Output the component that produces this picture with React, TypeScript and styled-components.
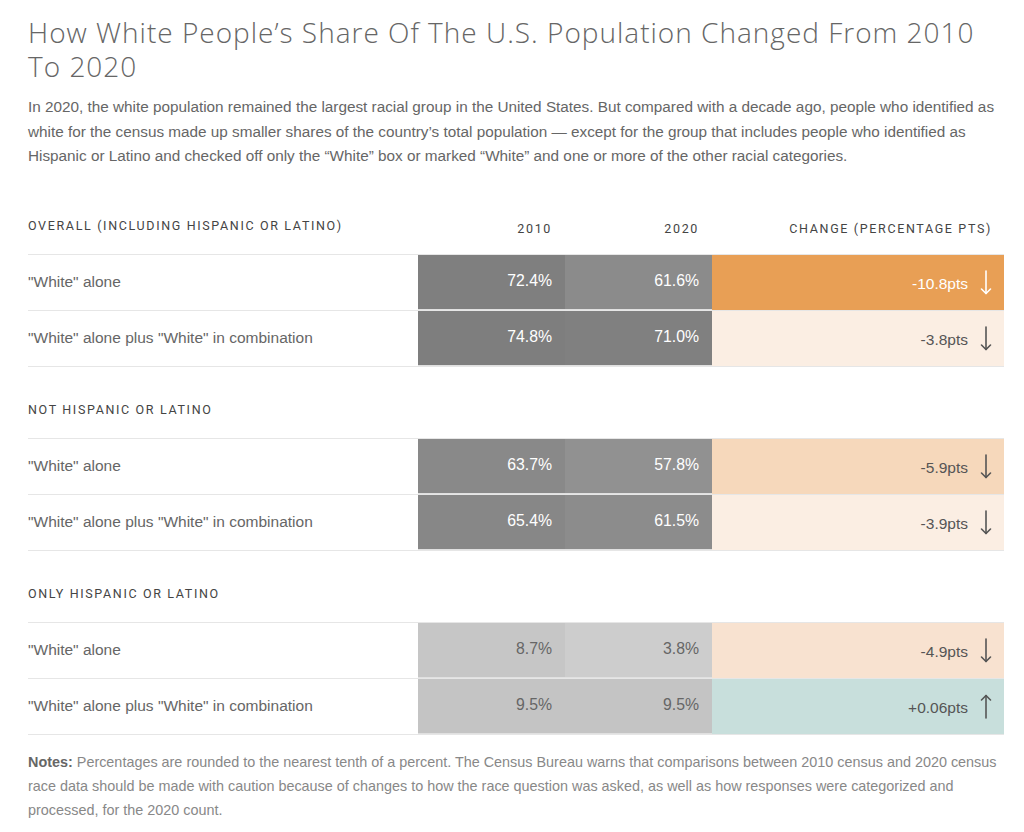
import React from "react"
import styled, { createGlobalStyle } from "styled-components"

const GlobalStyle = createGlobalStyle`
  body {
    margin: 0;
    background: #fff;
    font-family: "Liberation Sans", Arial, sans-serif;
  }
`

type Change = {
  value: string
  up?: boolean
  bg: string
  light?: boolean
}

type Row = {
  label: string
  y2010: string
  y2020: string
  bg2010: string
  bg2020: string
  darkText?: boolean
  change: Change
}

type Section = {
  title: string
  rows: Row[]
}

const SECTIONS: Section[] = [
  {
    title: "Overall (including Hispanic or Latino)",
    rows: [
      {
        label: "\"White\" alone",
        y2010: "72.4%",
        y2020: "61.6%",
        bg2010: "#7f7f7f",
        bg2020: "#8b8b8b",
        change: { value: "-10.8pts", bg: "#e89f55", light: true },
      },
      {
        label: "\"White\" alone plus \"White\" in combination",
        y2010: "74.8%",
        y2020: "71.0%",
        bg2010: "#7e7e7e",
        bg2020: "#808080",
        change: { value: "-3.8pts", bg: "#fbeee3" },
      },
    ],
  },
  {
    title: "Not Hispanic or Latino",
    rows: [
      {
        label: "\"White\" alone",
        y2010: "63.7%",
        y2020: "57.8%",
        bg2010: "#898989",
        bg2020: "#919191",
        change: { value: "-5.9pts", bg: "#f6d8bb" },
      },
      {
        label: "\"White\" alone plus \"White\" in combination",
        y2010: "65.4%",
        y2020: "61.5%",
        bg2010: "#878787",
        bg2020: "#8c8c8c",
        change: { value: "-3.9pts", bg: "#fbeee3" },
      },
    ],
  },
  {
    title: "Only Hispanic or Latino",
    rows: [
      {
        label: "\"White\" alone",
        y2010: "8.7%",
        y2020: "3.8%",
        bg2010: "#c6c6c6",
        bg2020: "#cdcdcd",
        darkText: true,
        change: { value: "-4.9pts", bg: "#f8e2d0" },
      },
      {
        label: "\"White\" alone plus \"White\" in combination",
        y2010: "9.5%",
        y2020: "9.5%",
        bg2010: "#c4c4c4",
        bg2020: "#c4c4c4",
        darkText: true,
        change: { value: "+0.06pts", bg: "#c8dfdc", up: true },
      },
    ],
  },
]

const Page = styled.div`
  padding: 15px 20px 20px 28px;
  color: #666;
`

const Title = styled.h1`
  margin: 0;
  font-family: "Open Sans", sans-serif;
  font-weight: 300;
  font-size: 28px;
  letter-spacing: 1px;
  line-height: 34px;
  color: #666;
`

const Intro = styled.p`
  margin: 12px 0 14px;
  font-size: 15.3px;
  line-height: 24.5px;
  color: #666;
`

const Grid = styled.div`
  display: grid;
  grid-template-columns: 390px 147px 147px 1fr;
`

const HeadRow = styled(Grid)`
  height: 71px;
  align-items: end;
  border-bottom: 1px solid #e6e6e6;
`

const HeadCell = styled.div<{ $right?: boolean; $pad?: number }>`
  font-family: Roboto, sans-serif;
  font-weight: 400;
  font-size: 12.5px;
  letter-spacing: 1.65px;
  text-transform: uppercase;
  line-height: 20px;
  color: #444;
  text-align: ${p => (p.$right ? "right" : "left")};
  padding-right: ${p => p.$pad ?? 0}px;
  padding-bottom: ${p => (p.$right ? 15 : 18)}px;
`

const DataRow = styled(Grid)`
  height: 55px;
  border-bottom: 1px solid #e6e6e6;
`

const Label = styled.div`
  display: flex;
  align-items: center;
  font-size: 15.5px;
  color: #666;
`

const Value = styled.div<{ $bg: string; $dark?: boolean }>`
  display: flex;
  align-items: center;
  justify-content: flex-end;
  padding: 0 13px 2px 0;
  background: ${p => p.$bg};
  color: ${p => (p.$dark ? "#666" : "#fff")};
  font-size: 15.8px;
  box-shadow: inset 0 -1px 0 #e0e0e0;
`

const ChangeCell = styled.div<{ $bg: string; $light?: boolean }>`
  display: flex;
  align-items: center;
  justify-content: flex-end;
  gap: 12px;
  padding: 4px 12px 0 0;
  background: ${p => p.$bg};
  color: ${p => (p.$light ? "#fff" : "#555")};
  font-size: 15.5px;
`

const Arrow = styled.svg`
  display: block;
  margin-top: -4px;
`

const Notes = styled.p`
  margin: 15px 0 0;
  font-size: 14.4px;
  line-height: 24px;
  color: #888;
`

const NotesLead = styled.b`
  color: #666;
`

const ArrowIcon = ({ up }: { up?: boolean }) => (
  <Arrow width="12" height="25" viewBox="0 0 12 25" fill="none" stroke="currentColor" strokeWidth="1.6" strokeLinecap="round" strokeLinejoin="round">
    {up ? (
      <>
        <line x1="6" y1="1.5" x2="6" y2="24" />
        <polyline points="1.5,6 6,1.5 10.5,6" />
      </>
    ) : (
      <>
        <line x1="6" y1="1" x2="6" y2="23.5" />
        <polyline points="1.5,19 6,23.5 10.5,19" />
      </>
    )}
  </Arrow>
)

const App = () => {
  return (
    <Page>
      <GlobalStyle />
      <Title>How White People’s Share Of The U.S. Population Changed From 2010 To 2020</Title>
      <Intro>
        In 2020, the white population remained the largest racial group in the United States. But compared with a decade ago, people who identified as white for the census made up smaller shares of the country’s total population — except for the group that includes people who identified as Hispanic or Latino and checked off only the “White” box or marked “White” and one or more of the other racial categories.
      </Intro>
      {SECTIONS.map((section, i) => (
        <div key={section.title}>
          <HeadRow>
            <HeadCell>{section.title}</HeadCell>
            {i === 0 && (
              <>
                <HeadCell $right $pad={13}>2010</HeadCell>
                <HeadCell $right $pad={13}>2020</HeadCell>
                <HeadCell $right $pad={12}>Change (percentage pts)</HeadCell>
              </>
            )}
          </HeadRow>
          {section.rows.map(row => (
            <DataRow key={row.label}>
              <Label>{row.label}</Label>
              <Value $bg={row.bg2010} $dark={row.darkText}>{row.y2010}</Value>
              <Value $bg={row.bg2020} $dark={row.darkText}>{row.y2020}</Value>
              <ChangeCell $bg={row.change.bg} $light={row.change.light}>
                {row.change.value}
                <ArrowIcon up={row.change.up} />
              </ChangeCell>
            </DataRow>
          ))}
        </div>
      ))}
      <Notes>
        <NotesLead>Notes: </NotesLead>
        <span>Percentages are rounded to the nearest tenth of a percent. The Census Bureau warns that comparisons between 2010 census and 2020 census race data should be made with caution because of changes to how the race question was asked, as well as how responses were categorized and processed, for the 2020 count.</span>
      </Notes>
    </Page>
  )
}

export default App
